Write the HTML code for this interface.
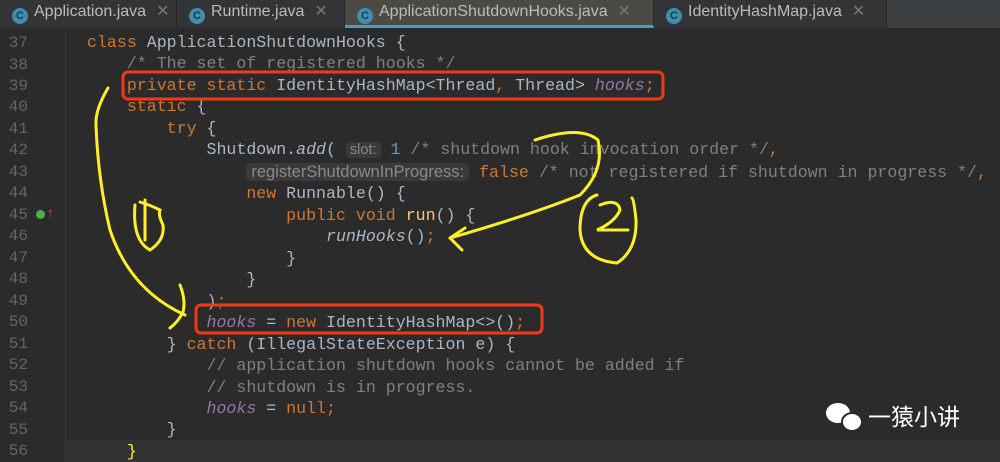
<!DOCTYPE html><html><head><meta charset="utf-8"><style>
html,body{margin:0;width:1000px;height:462px;overflow:hidden}
body{background:#2b2b2b;position:relative;font-family:"Liberation Sans",sans-serif}
.tabs{position:absolute;left:0;top:0;width:1000px;height:28px;background:#3c3f41;border-bottom:1px solid #2a2a2a}
.tab{position:absolute;top:0;height:28px;background:#323436;color:#bbb;font-size:16px;line-height:24px;border-right:1px solid #262626}
.tab.a{background:#4b4a45;border-bottom:3px solid #4a9cc7;height:25px}
.ic{display:inline-block;width:16px;height:16px;border-radius:50%;background:#3f8eae;vertical-align:-3px;margin:0 6px 0 12px;color:#1c3a48;font-size:11px;text-align:center;line-height:16px;font-weight:bold}
.x{color:#777;margin-left:10px}
.gut{position:absolute;left:0;top:29px;width:65px;height:433px;border-right:1px solid #3a3a3a;background:#2b2b2b}
.ln{position:absolute;left:0;width:28px;text-align:right;color:#666;font-family:"Liberation Mono",monospace;font-size:16px}
.code{position:absolute;left:87px;top:32px;font-family:"Liberation Mono",monospace;font-size:16.6px;line-height:21.47px;color:#a9b7c6;white-space:pre}
.k{color:#cc7832}.c{color:#808080}.p{color:#9876aa;font-style:italic}.n{color:#6897bb}.i{font-style:italic}.m{color:#ffc66d}
.h{font-family:"Liberation Sans",sans-serif;font-size:14.5px;color:#8a8a8a;background:#3a3a3a;border-radius:4px;padding:0 4px}
.h2{font-size:16.5px;padding:0 5px}
.cur{position:absolute;left:66px;top:440px;width:934px;height:22px;background:#323232}
</style></head><body>
<div class="cur"></div>
<div class="tabs">
<div class="tab" style="left:0;width:176px"><span class="ic">C</span>Application.java<span class="x">✕</span></div>
<div class="tab" style="left:177px;width:167px"><span class="ic">C</span>Runtime.java<span class="x">✕</span></div>
<div class="tab a" style="left:345px;width:308px"><span class="ic">C</span>ApplicationShutdownHooks.java<span class="x">✕</span></div>
<div class="tab" style="left:654px;width:232px"><span class="ic">C</span>IdentityHashMap.java<span class="x">✕</span></div>
</div>
<div class="gut"></div>
<div style="position:absolute;left:0;top:34px">
<div class="ln" style="top:0">37</div><div class="ln" style="top:21.5px">38</div><div class="ln" style="top:43px">39</div><div class="ln" style="top:64.4px">40</div><div class="ln" style="top:85.9px">41</div><div class="ln" style="top:107.4px">42</div><div class="ln" style="top:128.8px">43</div><div class="ln" style="top:150.3px">44</div><div class="ln" style="top:171.8px">45</div><div class="ln" style="top:193.2px">46</div><div class="ln" style="top:214.7px">47</div><div class="ln" style="top:236.2px">48</div><div class="ln" style="top:257.6px">49</div><div class="ln" style="top:279.1px">50</div><div class="ln" style="top:300.6px">51</div><div class="ln" style="top:322px">52</div><div class="ln" style="top:343.5px">53</div><div class="ln" style="top:365px">54</div><div class="ln" style="top:386.5px">55</div><div class="ln" style="top:408px">56</div>
</div>
<div style="position:absolute;left:36px;top:210px;width:9px;height:9px;border-radius:50%;background:#4caf50"></div>
<div style="position:absolute;left:47px;top:205px;color:#d44;font-size:13px">↑</div>
<div class="code"><span class="k">class</span> ApplicationShutdownHooks {
    <span class="c">/* The set of registered hooks */</span>
    <span class="k">private static</span> IdentityHashMap&lt;Thread<span class="k">,</span> Thread&gt; <span class="p">hooks</span><span class="k">;</span>
    <span class="k">static</span> {
        <span class="k">try</span> {
            Shutdown.<span class="i">add</span>( <span class="h">slot:</span> <span class="n">1</span> <span class="c">/* shutdown hook invocation order */</span><span class="k">,</span>
                <span class="h h2">registerShutdownInProgress:</span> <span class="k">false</span> <span class="c">/* not registered if shutdown in progress */</span><span class="k">,</span>
                <span class="k">new</span> Runnable() {
                    <span class="k">public void</span> <span class="m">run</span>() {
                        <span class="i">runHooks</span>()<span class="k">;</span>
                    }
                }
            )<span class="k">;</span>
            <span class="p">hooks</span> = <span class="k">new</span> IdentityHashMap&lt;&gt;()<span class="k">;</span>
        } <span class="k">catch</span> (IllegalStateException e) {
            <span class="c">// application shutdown hooks cannot be added if</span>
            <span class="c">// shutdown is in progress.</span>
            <span class="p">hooks</span> = <span class="k">null;</span>
        }
    <span style="color:#ffef28">}</span></div>
<svg style="position:absolute;left:0;top:0" width="1000" height="462">
<rect x="123" y="72" width="540" height="27" rx="5" fill="none" stroke="#f03a17" stroke-width="3"/>
<rect x="196" y="305" width="346" height="28" rx="5" fill="none" stroke="#f03a17" stroke-width="3"/>
<g fill="none" stroke="#ffef28" stroke-width="3" stroke-linecap="round">
<path d="M108 88 Q95 110 96 125 Q98 180 110 230 Q130 290 185 315"/>
<path d="M180 285 Q186 300 183 312 Q178 322 170 328"/>
<path d="M145 200 L145 240 M135 205 Q132 240 150 250 Q165 240 163 225 Q158 215 160 210 Q150 205 140 202"/>
<path d="M535 140 Q580 125 598 140 Q605 170 580 195 Q530 215 450 238"/>
<path d="M450 238 L465 228 M450 238 L462 250"/>
<path d="M597 195 Q580 200 580 230 Q582 260 617 263 Q637 250 636 220 Q634 200 632 198"/>
<path d="M600 205 Q618 198 620 210 Q615 222 597 230 L628 230"/>
</g>
<g fill="#fff"><ellipse cx="838" cy="413" rx="12" ry="10"/><ellipse cx="852" cy="422" rx="10" ry="9" stroke="#2b2b2b" stroke-width="2"/></g>
<text x="868" y="425" fill="#fff" font-size="23" font-family="Liberation Sans, Noto Sans CJK SC, sans-serif">一猿小讲</text>
</svg>
</body></html>
